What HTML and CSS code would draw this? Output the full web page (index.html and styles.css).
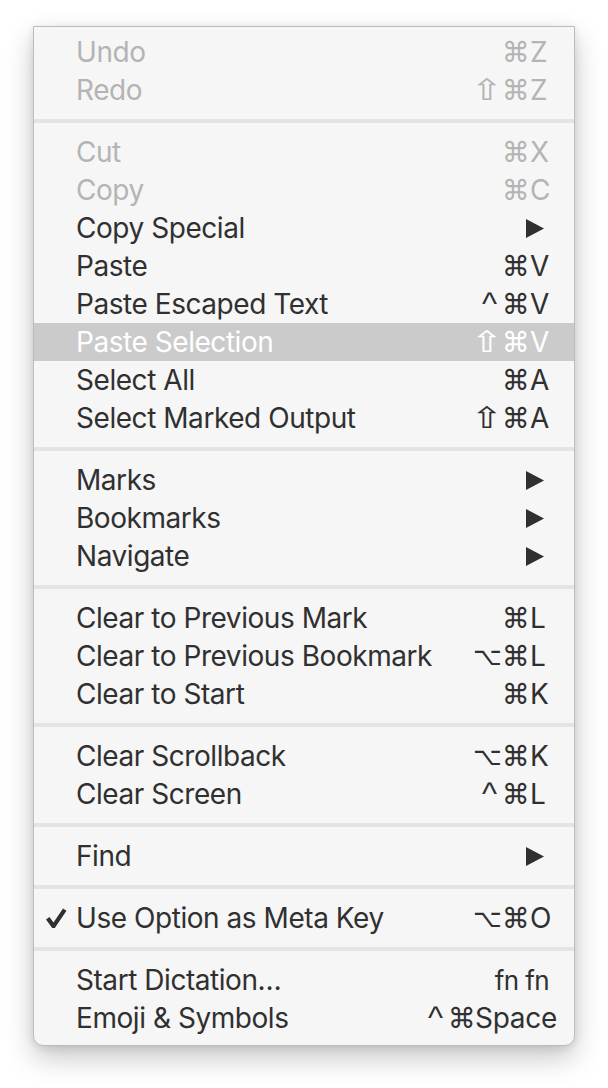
FILE: index.html
```html
<!DOCTYPE html>
<html>
<head>
<meta charset="utf-8">
<link rel="stylesheet" href="styles.css">
</head>
<body>
<div class="menu">
  <div class="item disabled"><span class="check"></span><span class="label">Undo</span><span class="sc"><span class="g cmd">⌘</span><span class="key">Z</span></span></div>
  <div class="item disabled"><span class="check"></span><span class="label">Redo</span><span class="sc"><span class="g shift">⇧</span><span class="g cmd">⌘</span><span class="key">Z</span></span></div>
  <div class="sep"></div>
  <div class="item disabled"><span class="check"></span><span class="label">Cut</span><span class="sc"><span class="g cmd">⌘</span><span class="key">X</span></span></div>
  <div class="item disabled"><span class="check"></span><span class="label">Copy</span><span class="sc"><span class="g cmd">⌘</span><span class="key">C</span></span></div>
  <div class="item"><span class="check"></span><span class="label">Copy Special</span><svg class="arrow" viewBox="0 0 18 19"><path d="M0 0 L18 9.5 L0 19 Z"/></svg></div>
  <div class="item"><span class="check"></span><span class="label">Paste</span><span class="sc"><span class="g cmd">⌘</span><span class="key">V</span></span></div>
  <div class="item"><span class="check"></span><span class="label">Paste Escaped Text</span><span class="sc"><span class="g ctrl">^</span><span class="g cmd">⌘</span><span class="key">V</span></span></div>
  <div class="item selected"><span class="check"></span><span class="label">Paste Selection</span><span class="sc"><span class="g shift">⇧</span><span class="g cmd">⌘</span><span class="key">V</span></span></div>
  <div class="item"><span class="check"></span><span class="label">Select All</span><span class="sc"><span class="g cmd">⌘</span><span class="key">A</span></span></div>
  <div class="item"><span class="check"></span><span class="label">Select Marked Output</span><span class="sc"><span class="g shift">⇧</span><span class="g cmd">⌘</span><span class="key">A</span></span></div>
  <div class="sep"></div>
  <div class="item"><span class="check"></span><span class="label">Marks</span><svg class="arrow" viewBox="0 0 18 19"><path d="M0 0 L18 9.5 L0 19 Z"/></svg></div>
  <div class="item"><span class="check"></span><span class="label">Bookmarks</span><svg class="arrow" viewBox="0 0 18 19"><path d="M0 0 L18 9.5 L0 19 Z"/></svg></div>
  <div class="item"><span class="check"></span><span class="label">Navigate</span><svg class="arrow" viewBox="0 0 18 19"><path d="M0 0 L18 9.5 L0 19 Z"/></svg></div>
  <div class="sep"></div>
  <div class="item"><span class="check"></span><span class="label">Clear to Previous Mark</span><span class="sc"><span class="g cmd">⌘</span><span class="key">L</span></span></div>
  <div class="item"><span class="check"></span><span class="label">Clear to Previous Bookmark</span><span class="sc"><span class="g opt">⌥</span><span class="g cmd">⌘</span><span class="key">L</span></span></div>
  <div class="item"><span class="check"></span><span class="label">Clear to Start</span><span class="sc"><span class="g cmd">⌘</span><span class="key">K</span></span></div>
  <div class="sep"></div>
  <div class="item"><span class="check"></span><span class="label">Clear Scrollback</span><span class="sc"><span class="g opt">⌥</span><span class="g cmd">⌘</span><span class="key">K</span></span></div>
  <div class="item"><span class="check"></span><span class="label">Clear Screen</span><span class="sc"><span class="g ctrl">^</span><span class="g cmd">⌘</span><span class="key">L</span></span></div>
  <div class="sep"></div>
  <div class="item"><span class="check"></span><span class="label">Find</span><svg class="arrow" viewBox="0 0 18 19"><path d="M0 0 L18 9.5 L0 19 Z"/></svg></div>
  <div class="sep"></div>
  <div class="item"><span class="check"><svg class="tick" viewBox="0 0 22 20"><path d="M1 11.5 L4.5 9 L8.5 14.5 L18 0.5 L21.5 2.8 L9.8 20 L7.2 20 Z"/></svg></span><span class="label">Use Option as Meta Key</span><span class="sc"><span class="g opt">⌥</span><span class="g cmd">⌘</span><span class="key">O</span></span></div>
  <div class="sep"></div>
  <div class="item"><span class="check"></span><span class="label">Start Dictation…</span><span class="sc-text fn">fn fn</span></div>
  <div class="item"><span class="check"></span><span class="label">Emoji &amp; Symbols</span><span class="sc space"><span class="g ctrl">^</span><span class="g cmd">⌘</span><span class="space-key">Space</span></span></div>
</div>
</body>
</html>
```

FILE: styles.css
```css
html, body {
  margin: 0;
  padding: 0;
  background: #ffffff;
}

body {
  width: 608px;
  height: 1088px;
  overflow: hidden;
}

.menu {
  margin: 26px 0 0 33px;
  width: 540px;
  background: #f6f6f6;
  border: 1px solid #bcbcbc;
  border-radius: 0 0 10px 10px;
  padding: 6px 0 8px;
  box-shadow: 0 12px 28px rgba(0, 0, 0, 0.22), 0 2px 8px rgba(0, 0, 0, 0.10);
  font-family: "Inter", "DejaVu Sans", sans-serif;
  font-size: 28px;
  color: #303030;
}

.item {
  display: flex;
  align-items: center;
  height: 38px;
  padding: 0 18px 0 11px;
}

.item.disabled {
  color: #b4b4b4;
}

.item.selected {
  background: #cbcbcb;
  color: #ffffff;
}

.check {
  width: 31px;
  flex: 0 0 31px;
  display: flex;
  align-items: center;
}

.tick {
  width: 22px;
  height: 20px;
  fill: #303030;
}

.label {
  flex: 1;
  white-space: nowrap;
  letter-spacing: -0.45px;
}

.sc {
  display: flex;
  align-items: center;
}

.g {
  display: inline-block;
  font-family: "DejaVu Sans", sans-serif;
  font-size: 28px;
  text-align: center;
}

.g.cmd {
  width: 24px;
  margin-right: 4px;
}

.g.shift {
  width: 22px;
  margin-right: 5px;
  transform: scale(1.4, 1.05);
}

.g.opt {
  font-size: 25px;
  width: 25px;
  margin-right: 4px;
}

.g.ctrl {
  font-family: "Liberation Sans", sans-serif;
  font-size: 32px;
  width: 17px;
  margin-right: 4px;
  transform: translateY(-1px);
}

.key {
  width: 26px;
  text-align: left;
}

.space .g.cmd {
  margin-right: 3px;
}

.space-key {
  letter-spacing: -0.3px;
  margin-right: -1px;
}

.arrow {
  width: 18px;
  height: 19px;
  margin-right: 12px;
  fill: #303030;
}

.sc-text {
  white-space: nowrap;
}

.sc-text.fn {
  font-size: 26px;
  letter-spacing: -0.6px;
  margin-right: 7px;
}

.sep {
  height: 4px;
  margin: 10px 0;
  background: #e4e4e4;
}
```
